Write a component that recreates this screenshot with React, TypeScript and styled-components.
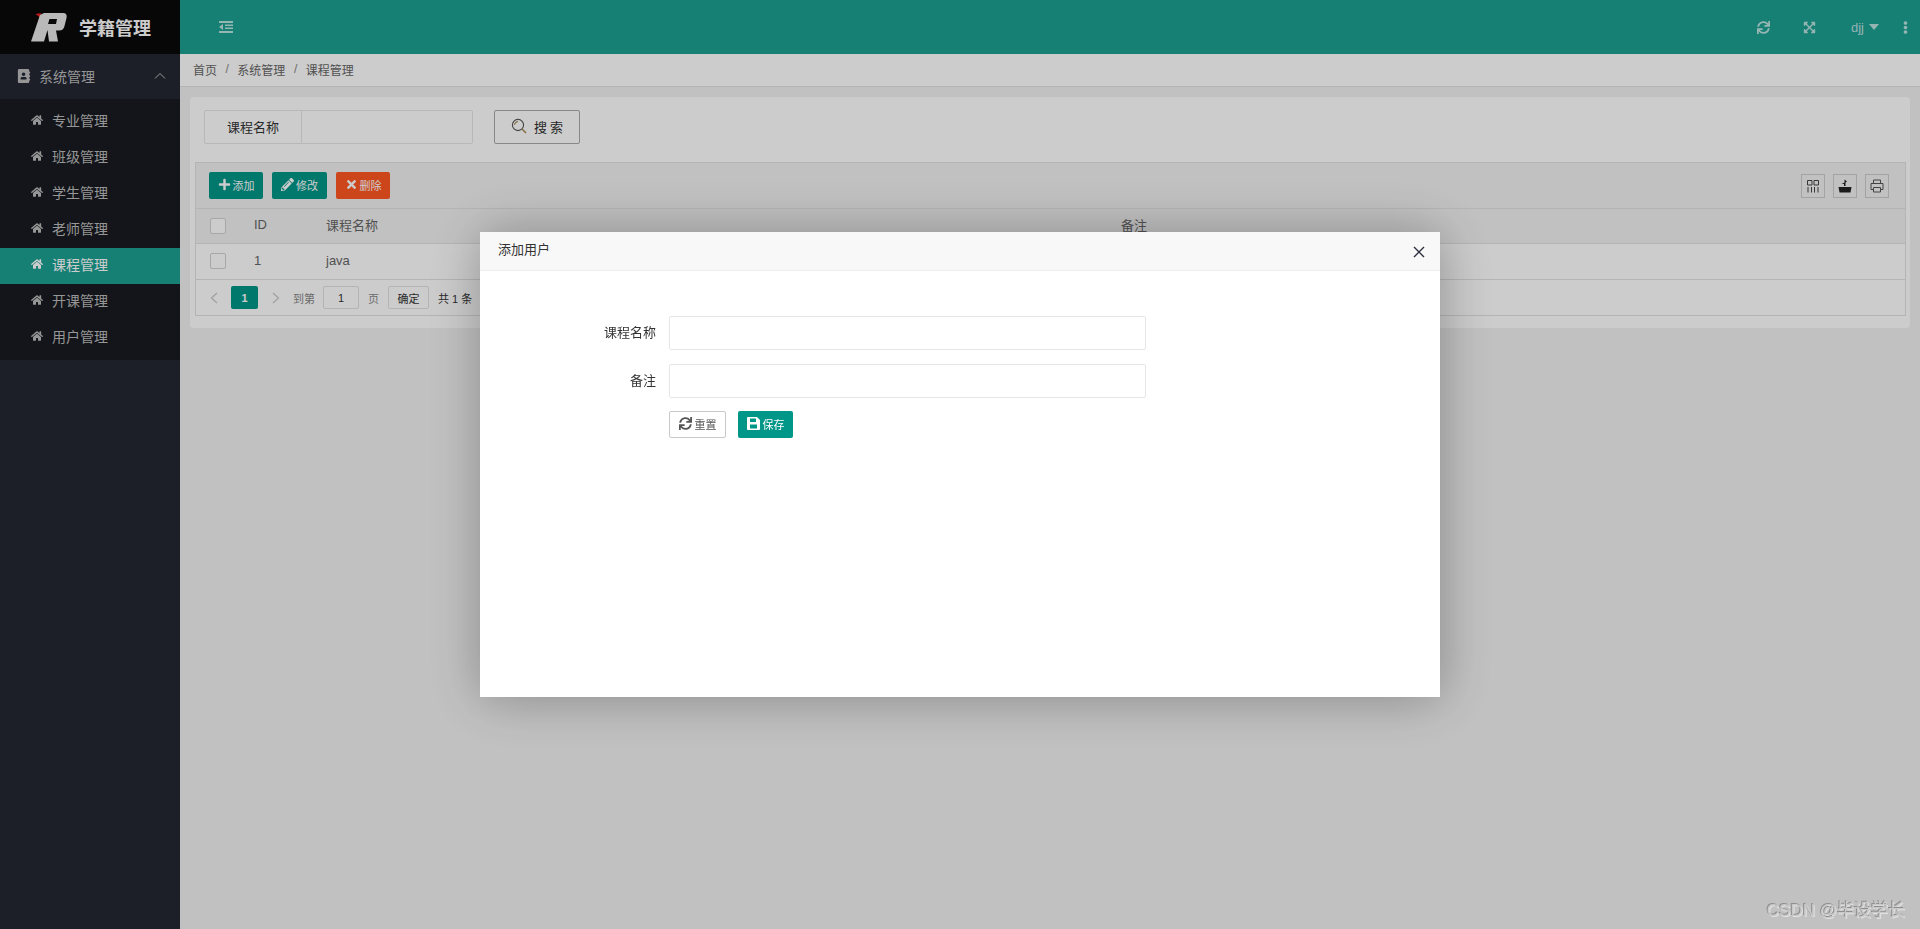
import React from 'react';
import styled, { createGlobalStyle } from 'styled-components';
import {
  FaAddressBook, FaEllipsisV, FaExpandArrowsAlt, FaHome,
  FaPencilAlt, FaPlus, FaSync, FaTimes,
} from 'react-icons/fa';

const GlobalStyle = createGlobalStyle`
  html, body { margin:0; padding:0; height:100%; overflow:hidden; }
  body {
    font-family:"Liberation Sans","Noto Sans CJK SC",sans-serif;
    font-size:13px;
    color:#333;
    background:#f2f2f2;
  }
  * { box-sizing:border-box; }
`;

const Page = styled.div`
  display:flex;
  height:929px;
`;

const Side = styled.aside`
  width:180px;
  flex:none;
  background:#232733;
  color:#bcbcbc;
`;
const Brand = styled.div`
  height:54px;
  background:#090909;
  display:flex;
  align-items:center;
  padding-left:30px;
  gap:12px;
  color:#fff;
  font-size:18px;
  font-weight:700;
`;
const MenuHead = styled.div`
  height:45px;
  background:#232733;
  display:flex;
  align-items:center;
  padding:0 14px 2px 17px;
  font-size:14px;
  gap:8px;
  svg:first-child { font-size:14px; }
`;
const Chevron = styled.svg`
  margin-left:auto;
  width:12px;
  height:8px;
`;
const SubMenu = styled.div`
  background:#181b21;
  padding:5px 0 4px;
`;
const SubItem = styled.div<{ $active?: boolean }>`
  height:36px;
  display:flex;
  align-items:center;
  padding:0 0 5px 31px;
  gap:9px;
  font-size:14px;
  color:${(p) => (p.$active ? '#fff' : '#bcbcbc')};
  background:${(p) => (p.$active ? '#1ca093' : 'transparent')};
  svg { font-size:12px; }
`;

const Main = styled.main`
  flex:1;
  min-width:0;
  display:flex;
  flex-direction:column;
`;
const Header = styled.header`
  height:54px;
  background:#1ca093;
  color:rgba(255,255,255,.7);
  display:flex;
  align-items:center;
  padding-left:39px;
  font-size:13px;
`;
const HeaderRight = styled.div`
  margin-left:auto;
  display:flex;
  align-items:center;
`;
const HeaderIcon = styled.span<{ $w: number }>`
  width:${(p) => p.$w}px;
  display:flex;
  align-items:center;
  font-size:13px;
`;
const Caret = styled.i`
  width:0;
  height:0;
  margin-left:5px;
  border-left:5px solid transparent;
  border-right:5px solid transparent;
  border-top:6px solid rgba(255,255,255,.7);
`;
const User = styled.span`
  width:48px;
  display:flex;
  align-items:center;
  font-size:13px;
`;
const Crumbs = styled.nav`
  height:33px;
  background:#fff;
  border-bottom:1px solid #e2e2e2;
  display:flex;
  align-items:center;
  padding:0 0 2px 13px;
  font-size:12px;
  color:#666;
`;
const CrumbSep = styled.span`
  margin:0 8.5px;
  color:#888;
`;
const Content = styled.div`
  padding:10px 10px 0 10px;
`;
const Card = styled.section`
  background:#fff;
  border-radius:4px;
  height:231px;
  padding:13px 4px 0 5px;
`;
const SearchRow = styled.div`
  display:flex;
  padding-left:9px;
  height:34px;
`;
const SearchLabel = styled.div`
  width:98px;
  padding-bottom:2px;
  border:1px solid #e6e6e6;
  border-radius:2px 0 0 2px;
  display:flex;
  align-items:center;
  justify-content:center;
`;
const SearchInput = styled.input`
  width:171px;
  border:1px solid #e6e6e6;
  border-left:0;
  border-radius:0 2px 2px 0;
  background:#fff;
`;
const SearchBtn = styled.button`
  margin-left:21px;
  width:86px;
  border:1px solid #aaa;
  border-radius:2px;
  background:#fff;
  display:flex;
  align-items:center;
  justify-content:center;
  gap:7px;
  font:inherit;
  font-size:13px;
  letter-spacing:3px;
  color:#333;
  padding:0 0 2px 3px;
`;
const TableBox = styled.div`
  margin-top:18px;
  border:1px solid #e2e2e2;
`;
const Toolbar = styled.div`
  height:46px;
  background:#f2f2f2;
  border-bottom:1px solid #e2e2e2;
  display:flex;
  align-items:center;
  padding:0 16px 0 13px;
  gap:9px;
`;
const ToolBtn = styled.button<{ $tone?: 'danger'; $w: number }>`
  height:27px;
  width:${(p) => p.$w}px;
  border:0;
  border-radius:2px;
  background:${(p) => (p.$tone === 'danger' ? '#ff5722' : '#009688')};
  color:#fff;
  font:inherit;
  font-size:11px;
  display:flex;
  align-items:center;
  justify-content:center;
  gap:2px;
  padding:0 0 2px;
  svg { font-size:13px; }
`;
const ToolRight = styled.div`
  margin-left:auto;
  display:flex;
  gap:8px;
`;
const ToolIcon = styled.span`
  width:24px;
  height:24px;
  border:1px solid #ccc;
  display:flex;
  align-items:center;
  justify-content:center;
  color:#333;
`;
const Row = styled.div<{ $head?: boolean }>`
  height:${(p) => (p.$head ? '35px' : '36px')};
  display:grid;
  grid-template-columns:58px 72px 795px 1fr;
  align-items:center;
  color:#666;
  background:${(p) => (p.$head ? '#f2f2f2' : '#fff')};
  border-bottom:1px solid #e2e2e2;
`;
const HeadCell = styled.span`
  padding-bottom:4px;
`;
const BodyCell = styled.span`
  padding-bottom:2px;
`;
const Check = styled.span`
  width:16px;
  height:16px;
  margin:0 0 1px 14px;
  border:1px solid #d2d2d2;
  border-radius:2px;
  background:#fff;
`;
const Pager = styled.div`
  height:35px;
  display:flex;
  align-items:center;
  padding-left:14px;
  font-size:11px;
  color:#888;
`;
const PageArrow = styled.svg`
  width:8px;
  height:12px;
  flex:none;
`;
const PageCurrent = styled.span`
  width:27px;
  height:23px;
  margin:0 14px 0 13px;
  border-radius:2px;
  background:#009688;
  color:#fff;
  font-weight:700;
  display:flex;
  align-items:center;
  justify-content:center;
`;
const PageLabel = styled.span`
  margin-left:13px;
`;
const PageInput = styled.span`
  width:36px;
  height:23px;
  margin:0 9px 0 8px;
  border:1px solid #e2e2e2;
  border-radius:2px;
  color:#333;
  display:flex;
  align-items:center;
  justify-content:center;
`;
const PageGo = styled.span`
  width:41px;
  height:23px;
  margin:0 9px;
  border:1px solid #e2e2e2;
  border-radius:2px;
  color:#333;
  display:flex;
  align-items:center;
  justify-content:center;
`;
const PageTotal = styled.span`
  color:#333;
`;

const Shade = styled.div`
  position:fixed;
  inset:0;
  background:rgba(0,0,0,.2);
`;
const Modal = styled.div`
  position:fixed;
  left:480px;
  top:232px;
  width:960px;
  height:465px;
  background:#fff;
  box-shadow:1px 1px 50px rgba(0,0,0,.3);
`;
const ModalHead = styled.div`
  height:39px;
  background:#f8f8f8;
  border-bottom:1px solid #eee;
  display:flex;
  align-items:center;
  padding:0 15px 6px 18px;
  color:#333;
`;
const ModalClose = styled.span`
  margin:8px 0 0 auto;
  display:flex;
  color:#2f2f3f;
`;
const ModalBody = styled.form`
  padding-top:45px;
  display:flex;
  flex-direction:column;
  gap:14px;
`;
const FormRow = styled.div`
  display:flex;
  align-items:center;
  height:34px;
`;
const FormLabel = styled.label`
  width:176px;
  padding-bottom:3px;
  text-align:right;
  color:#333;
`;
const FormInput = styled.input`
  width:477px;
  height:34px;
  margin-left:13px;
  border:1px solid #e6e6e6;
  border-radius:2px;
  background:#fff;
`;
const FormActions = styled.div`
  display:flex;
  gap:12px;
  margin:-1px 0 0 189px;
`;
const FormBtn = styled.button<{ $primary?: boolean }>`
  height:27px;
  width:${(p) => (p.$primary ? '55px' : '57px')};
  border:${(p) => (p.$primary ? '0' : '1px solid #c9c9c9')};
  border-radius:2px;
  background:${(p) => (p.$primary ? '#009688' : '#fff')};
  color:${(p) => (p.$primary ? '#fff' : '#555')};
  font:inherit;
  font-size:11px;
  display:flex;
  align-items:center;
  justify-content:center;
  gap:3px;
  padding:0 0 2px;
  svg { font-size:13px; }
`;
const Watermark = styled.div`
  position:fixed;
  right:15px;
  bottom:8px;
  font-size:17px;
  color:#c8c8c8;
  text-shadow:-1px -1px 0 #8e8e8e, 1px 1px 0 #e2e2e2;
`;

const menuItems = ['专业管理', '班级管理', '学生管理', '老师管理', '课程管理', '开课管理', '用户管理'];

const Logo = () => (
  <svg width="37" height="30" viewBox="0 0 37 30">
    <path d="M5.500 2L11 1l-1 4.500z" fill="#e81c1c" />
    <path
      fillRule="evenodd"
      d="M10 3L14 1H33Q37.500 1 36.500 6L34.500 14Q33.500 18.500 29 18.500H26L28 29.500H19L17.500 18L14 29.500H1ZM19.500 7H27L26 12H18Z"
      fill="#e8e8e8"
    />
  </svg>
);

const MenuFoldIcon = () => (
  <svg width="14" height="12" viewBox="0 0 14 12" fill="currentColor">
    <path d="M0 0h14v2H0zM6 3.500h8V5H6zM6 6.500h8V8H6zM4 3v6L0 6zM0 10h14v2H0z" />
  </svg>
);
const SearchIcon = () => (
  <svg width="16" height="16" viewBox="0 0 16 16" fill="none" stroke="#555" strokeWidth="1.100">
    <circle cx="7" cy="7" r="5.600" />
    <path d="M11 11l4 4" stroke="#a98a55" strokeWidth="1.600" />
    <path d="M3.600 7a3.400 3.400 0 0 1 3.400-3.400" stroke="#a98a55" />
  </svg>
);
const ColsIcon = () => (
  <svg width="14" height="14" viewBox="0 0 14 14" fill="none" stroke="#444">
    <path d="M1.500 1.500h4.500v4.500h-4.500zM8 1.500h4.500v4.500H8zM2 8v5.500M5.500 8v5.500M8.500 8v5.500M12 8v5.500" />
  </svg>
);
const ExportIcon = () => (
  <svg width="14" height="14" viewBox="0 0 14 14" fill="#222">
    <path d="M0.500 8h13l-1 5.500h-11zM6.500 0.500l2.500 2-1.500 1V7h-1.500V5H3.500l3-1.500z" />
  </svg>
);
const PrintIcon = () => (
  <svg width="14" height="14" viewBox="0 0 14 14" fill="none" stroke="#555">
    <path d="M3.500 4V1h7v3M3.500 10.500H1V4.500h12v6h-2.500M3.500 8.500h7v4.500h-7z" />
  </svg>
);
const SaveIcon = () => (
  <svg width="13" height="13" viewBox="0 0 13 13" fill="currentColor" fillRule="evenodd">
    <path d="M1 0h9l3 3v9a1 1 0 0 1-1 1H1a1 1 0 0 1-1-1V1a1 1 0 0 1 1-1zM3 1.500v3.500h6V1.500zM3 7.500v4h7v-4z" />
  </svg>
);

export default function App() {
  return (
    <>
      <GlobalStyle />
      <Page>
        <Side>
          <Brand>
            <Logo />
            学籍管理
          </Brand>
          <MenuHead>
            <FaAddressBook />
            系统管理
            <Chevron viewBox="0 0 12 8" fill="none" stroke="#c2c2c2" strokeWidth="1">
              <path d="M1 6.500L6 1.500l5 5" />
            </Chevron>
          </MenuHead>
          <SubMenu>
            {menuItems.map((item) => (
              <SubItem key={item} $active={item === '课程管理'}>
                <FaHome />
                {item}
              </SubItem>
            ))}
          </SubMenu>
        </Side>
        <Main>
          <Header>
            <MenuFoldIcon />
            <HeaderRight>
              <HeaderIcon $w={46}><FaSync /></HeaderIcon>
              <HeaderIcon $w={48}><FaExpandArrowsAlt /></HeaderIcon>
              <User>djj<Caret /></User>
              <HeaderIcon $w={21}><FaEllipsisV /></HeaderIcon>
            </HeaderRight>
          </Header>
          <Crumbs>
            首页<CrumbSep>/</CrumbSep>系统管理<CrumbSep>/</CrumbSep>课程管理
          </Crumbs>
          <Content>
            <Card>
              <SearchRow>
                <SearchLabel>课程名称</SearchLabel>
                <SearchInput />
                <SearchBtn><SearchIcon />搜索</SearchBtn>
              </SearchRow>
              <TableBox>
                <Toolbar>
                  <ToolBtn $w={54}><FaPlus />添加</ToolBtn>
                  <ToolBtn $w={55}><FaPencilAlt />修改</ToolBtn>
                  <ToolBtn $w={54} $tone="danger"><FaTimes />删除</ToolBtn>
                  <ToolRight>
                    <ToolIcon><ColsIcon /></ToolIcon>
                    <ToolIcon><ExportIcon /></ToolIcon>
                    <ToolIcon><PrintIcon /></ToolIcon>
                  </ToolRight>
                </Toolbar>
                <Row $head>
                  <Check />
                  <HeadCell>ID</HeadCell>
                  <HeadCell>课程名称</HeadCell>
                  <HeadCell>备注</HeadCell>
                </Row>
                <Row>
                  <Check />
                  <BodyCell>1</BodyCell>
                  <BodyCell>java</BodyCell>
                  <BodyCell />
                </Row>
                <Pager>
                  <PageArrow viewBox="0 0 8 12" fill="none" stroke="#c9c9c9" strokeWidth="1.200">
                    <path d="M7 1L1.500 6 7 11" />
                  </PageArrow>
                  <PageCurrent>1</PageCurrent>
                  <PageArrow viewBox="0 0 8 12" fill="none" stroke="#c9c9c9" strokeWidth="1.200">
                    <path d="M1 1l5.500 5L1 11" />
                  </PageArrow>
                  <PageLabel>到第</PageLabel>
                  <PageInput>1</PageInput>
                  页
                  <PageGo>确定</PageGo>
                  <PageTotal>共 1 条</PageTotal>
                </Pager>
              </TableBox>
            </Card>
          </Content>
        </Main>
      </Page>
      <Shade />
      <Modal>
        <ModalHead>
          添加用户
          <ModalClose>
            <svg width="12" height="12" viewBox="0 0 12 12" stroke="currentColor" strokeWidth="1.400">
              <path d="M1 1l10 10M11 1L1 11" />
            </svg>
          </ModalClose>
        </ModalHead>
        <ModalBody>
          <FormRow>
            <FormLabel>课程名称</FormLabel>
            <FormInput />
          </FormRow>
          <FormRow>
            <FormLabel>备注</FormLabel>
            <FormInput />
          </FormRow>
          <FormActions>
            <FormBtn type="button"><FaSync />重置</FormBtn>
            <FormBtn type="button" $primary><SaveIcon />保存</FormBtn>
          </FormActions>
        </ModalBody>
      </Modal>
      <Watermark>CSDN @毕设学长</Watermark>
    </>
  );
}
